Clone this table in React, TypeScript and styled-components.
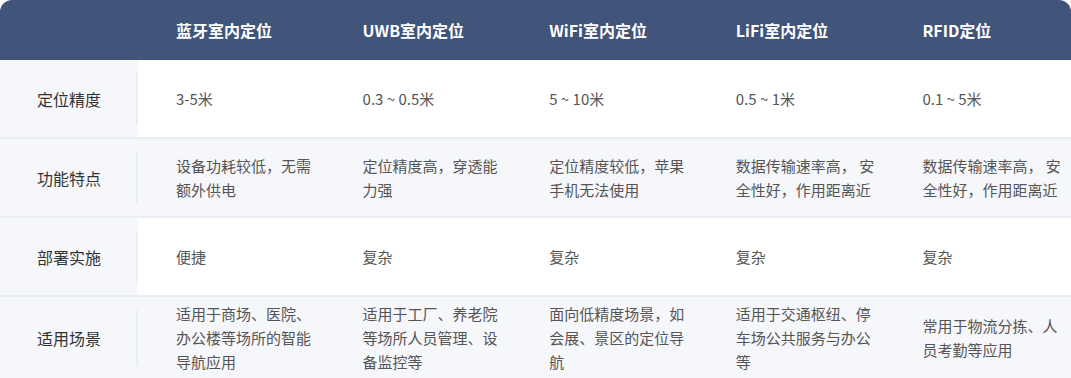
import React from "react";
import styled, { createGlobalStyle } from "styled-components";

const GlobalStyle = createGlobalStyle`
	html, body {
		margin: 0;
		padding: 0;
		background: #ffffff;
	}
	body {
		font-family: "Noto Sans CJK SC", "Noto Sans", sans-serif;
	}
	* {
		box-sizing: border-box;
	}
`;

const Table = styled.div`
	width: 1071px;
	height: 378px;
	overflow: hidden;
	display: flex;
	flex-direction: column;
`;

const Row = styled.div<{ $shaded?: boolean }>`
	display: grid;
	grid-template-columns: 138px repeat(5, 1fr);
	min-height: 79px;
	background: ${(p) => (p.$shaded ? "#f5f7fb" : "#ffffff")};
	border-bottom: 2px solid #e9edf4;
	flex-shrink: 0;

	&:last-child {
		min-height: 82px;
		border-bottom: none;
	}
`;

const HeadRow = styled.div`
	display: grid;
	grid-template-columns: 138px repeat(5, 1fr);
	height: 60px;
	background: #415479;
	border-radius: 12px 12px 0 0;
	flex-shrink: 0;
`;

const HeadCell = styled.div`
	display: flex;
	align-items: center;
	padding-left: 38px;
	color: #ffffff;
	font-size: 16px;
	font-weight: 600;
`;

const Label = styled.div`
	position: relative;
	display: flex;
	align-items: center;
	justify-content: center;
	background: #f5f7fb;
	color: #333333;
	font-size: 16px;

	&::after {
		content: "";
		position: absolute;
		right: 0;
		top: 13px;
		bottom: 13px;
		width: 2px;
		background: #e9edf4;
	}
`;

const Cell = styled.div`
	display: flex;
	align-items: center;
	padding: 4px 6px 4px 38px;
	color: #555555;
	font-size: 15px;
	line-height: 24px;
`;

const columns = ["蓝牙室内定位", "UWB室内定位", "WiFi室内定位", "LiFi室内定位", "RFID定位"];

const rows = [
	{
		label: "定位精度",
		values: ["3-5米", "0.3 ~ 0.5米", "5 ~ 10米", "0.5 ~ 1米", "0.1 ~ 5米"],
	},
	{
		label: "功能特点",
		shaded: true,
		values: [
			"设备功耗较低，无需额外供电",
			"定位精度高，穿透能力强",
			"定位精度较低，苹果手机无法使用",
			"数据传输速率高， 安全性好，作用距离近",
			"数据传输速率高， 安全性好，作用距离近",
		],
	},
	{
		label: "部署实施",
		values: ["便捷", "复杂", "复杂", "复杂", "复杂"],
	},
	{
		label: "适用场景",
		shaded: true,
		values: [
			"适用于商场、医院、办公楼等场所的智能导航应用",
			"适用于工厂、养老院等场所人员管理、设备监控等",
			"面向低精度场景，如会展、景区的定位导航",
			"适用于交通枢纽、停车场公共服务与办公等",
			"常用于物流分拣、人员考勤等应用",
		],
	},
];

export default function App() {
	return (
		<>
			<GlobalStyle />
			<Table>
				<HeadRow>
					<HeadCell />
					{columns.map((c) => (
						<HeadCell key={c}>{c}</HeadCell>
					))}
				</HeadRow>
				{rows.map((r) => (
					<Row key={r.label} $shaded={r.shaded}>
						<Label>{r.label}</Label>
						{r.values.map((v, i) => (
							<Cell key={i}>{v}</Cell>
						))}
					</Row>
				))}
			</Table>
		</>
	);
}
